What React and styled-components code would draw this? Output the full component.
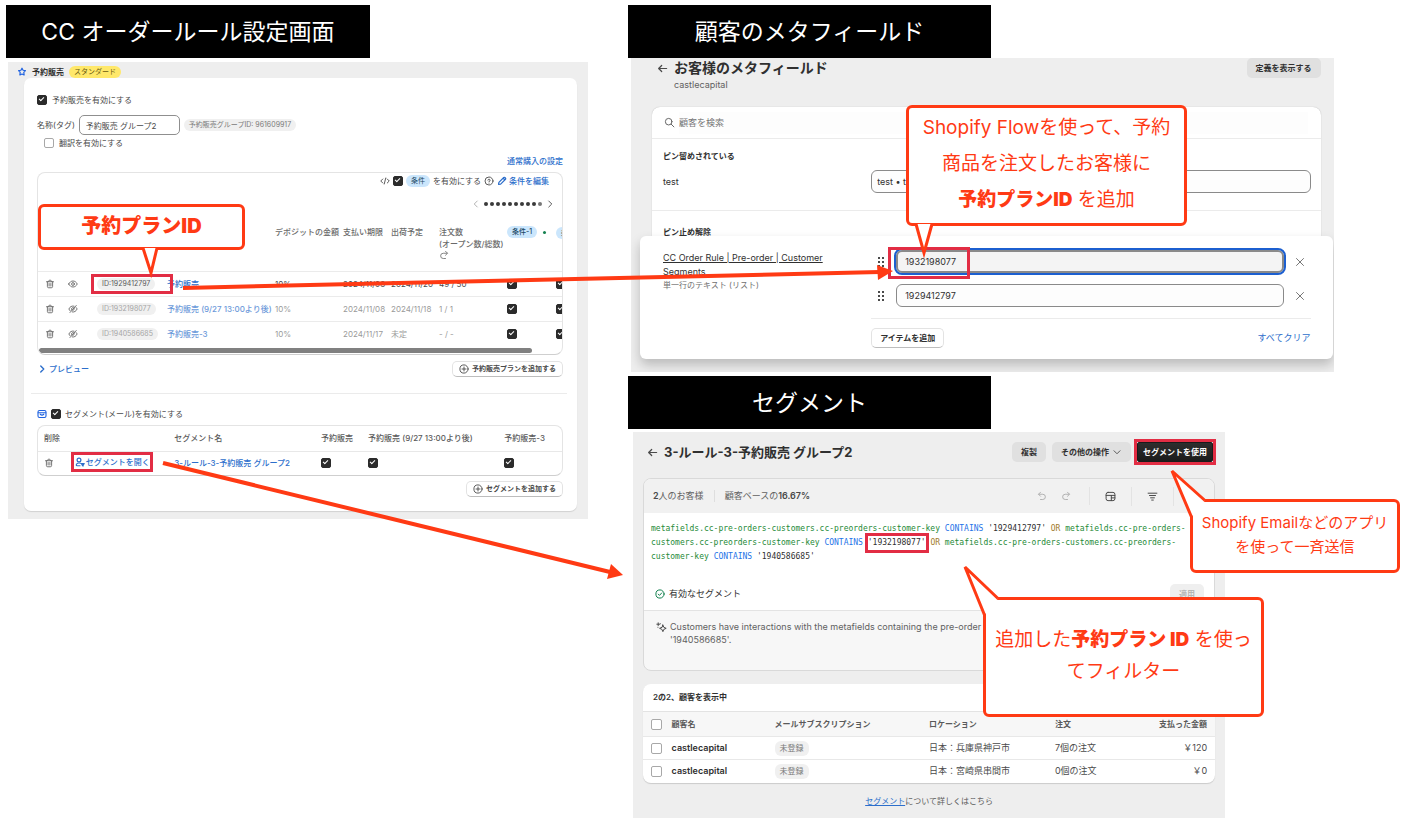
import styled, {createGlobalStyle, css} from 'styled-components';

const RED = '#ff3a14';
const MARK = '#e22d44';
const BLUE = '#2c6ecb';

const GlobalStyle = createGlobalStyle`
	*, *::before, *::after {
		box-sizing:border-box;
	}
	body {
		margin:0;
		background:#fff;
		color:#303030;
		font-family:Inter, "Noto Sans CJK JP", sans-serif;
		font-size:8px;
		line-height:12px;
	}
	button, input {
		font-family:inherit;
		color:inherit;
		margin:0;
	}
	h1, h2, h3, p {
		margin:0;
	}
`

/* ---------- icons (20 x 20 grid) ---------- */

const Svg = styled.svg`
	display:block;
	flex:none;
	width:${props=>props.$size || 10}px;
	height:${props=>props.$size || 10}px;
	fill:none;
	stroke:${props=>props.$color || '#4a4a4a'};
	stroke-width:${props=>props.$weight || 1.8};
	stroke-linecap:round;
	stroke-linejoin:round;
`

const shapes = {
	star:<path d="M10 2.5l2.2 4 4.6.8-3.2 3.4.6 5.3L10 14l-4.2 2 .6-5.3-3.2-3.4 4.6-.8z"/>,
	trash:<path d="M3 5.5h14M7.5 5.2V4A1.5 1.5 0 0 1 9 2.5h2A1.5 1.5 0 0 1 12.5 4v1.2M4.8 5.5V15a2.5 2.5 0 0 0 2.5 2.500h5.400a2.500 2.500 0 0 0 2.500-2.500V5.500M8.200 9v5M11.800 9v5"/>,
	eye:<><path d="M1.500 10C3.500 6 6.500 4 10 4s6.500 2 8.500 6c-2 4-5 6-8.500 6s-6.500-2-8.500-6z"/><circle cx="10" cy="10" r="2.800"/></>,
	eyeOff:<><path d="M12 4.300C7.500 3.200 3.800 5.400 1.800 10c.6 1.400 1.400 2.600 2.400 3.500M8.500 15.900c4.200.8 7.700-1.400 9.700-5.900-.5-1.200-1.200-2.200-2-3"/><path d="M16.500 3L4 17M7.500 11.500A2.800 2.800 0 0 1 11 7.400M12.600 9a2.800 2.800 0 0 1-3 3.700"/></>,
	code:<path d="M5.500 6L1.500 10l4 4M14.500 6l4 4-4 4M11.500 4l-3 12"/>,
	help:<><circle cx="10" cy="10" r="8"/><path d="M7.800 8.200A2.200 2.200 0 1 1 10 10.800v.6M10 14.200v.1"/></>,
	pencil:<path d="M12.500 4.500l3 3M3 17l.8-4.300L13.500 3a1.600 1.600 0 0 1 2.300 0L17 4.200a1.600 1.600 0 0 1 0 2.300l-9.700 9.700z"/>,
	left:<path d="M12.500 4l-6 6 6 6"/>,
	right:<path d="M7.500 4l6 6-6 6"/>,
	down:<path d="M4 7.500l6 6 6-6"/>,
	redo:<path d="M13 2.500l4 4-4 4M16.500 6.500H8.500a5 5 0 0 0 0 10.500h4.500"/>,
	undo:<path d="M7 2.500l-4 4 4 4M3.500 6.500h8a5 5 0 0 1 0 10.500H7"/>,
	plus:<><circle cx="10" cy="10" r="8.200"/><path d="M10 6v8M6 10h8"/></>,
	mail:<><rect x="2" y="3" width="16" height="14" rx="3"/><path d="M2.500 7.500h15M6.500 10.500c2 2 5 2 7 0"/></>,
	person:<><circle cx="8" cy="6" r="3.800"/><path d="M11 12.500c-4-1.500-8.500.5-8.500 3.500 0 1 .8 1.500 1.800 1.500H10M12.500 13h6l-2.200 2.500v2.500l-1.600-.5v-2z"/></>,
	back:<path d="M17.500 10H3M8.500 4.500L3 10l5.500 5.500"/>,
	search:<><circle cx="8.500" cy="8.500" r="6"/><path d="M13 13l5 5"/></>,
	close:<path d="M3 3l14 14M17 3L3 17"/>,
	layout:<><rect x="2" y="2.500" width="16" height="15" rx="3.500"/><path d="M2 8h16M11.500 8v9.500M11.500 12.500H18"/></>,
	filter:<path d="M2 4h16M4.500 8.200h11M6.500 12.400h7M8.500 16.500h3"/>,
	ok:<><circle cx="10" cy="10" r="8.200"/><path d="M6.500 10.300l2.500 2.500 4.500-5"/></>,
	sparkle:<><path d="M12.500 5.500l1.800 4.200 4.200 1.800-4.200 1.800-1.800 4.200-1.800-4.200-4.200-1.800 4.200-1.800z"/><path d="M4 1.500v5M1.500 4h5M8 3.200v.1M3.500 9.500v.1"/></>,
}

const Icon = ({name,size,color,weight})=>(
	<Svg viewBox="0 0 20 20" aria-hidden="true" $size={size} $color={color} $weight={weight}>
		{shapes[name]}
	</Svg>
)

/* ---------- shared parts ---------- */

const Canvas = styled.main`
	position:relative;
	display:grid;
	grid-template-columns:minmax(0,582fr) minmax(0,772fr);
	align-items:start;
	gap:40px;
	padding:5px 21px 7px 6px;
`

const Banner = styled.h1`
	display:flex;
	align-items:center;
	justify-content:center;
	width:${props=>props.$width};
	height:53px;
	background:#000;
	color:#fff;
	font-size:23px;
	font-weight:400;
	line-height:32px;
`

const CheckBox = styled.input.attrs({type:'checkbox'})`
	appearance:none;
	position:relative;
	flex:none;
	display:block;
	width:${props=>props.$large ? 11 : 10}px;
	height:${props=>props.$large ? 11 : 10}px;
	border:1px solid #a8a8a8;
	border-radius:2px;
	background:#fff;

	&:checked {
		background:#2b2b2b;
		border-color:#2b2b2b;
	}
	&:checked::after {
		content:"";
		position:absolute;
		left:1px;
		top:1px;
		width:5px;
		height:3px;
		border:solid #fff;
		border-width:0 0 1px 1px;
		transform:rotate(-45deg);
	}
`

const Badge = styled.span`
	display:inline-flex;
	align-items:center;
	height:${props=>props.$large ? 15 : 12}px;
	padding:0 5px;
	border-radius:6px;
	font-size:${props=>props.$large ? 8 : 7}px;
	white-space:nowrap;
	background:${props=>({warn:'#ffe86a',info:'#cbe6fc'})[props.$tone] || '#f0f0f0'};
	color:${props=>({warn:'#6b5a10',info:'#1c4a66',dim:'#a5a5a5',dark:'#5a5a5a'})[props.$tone] || '#7a7a7a'};
`

const TextLink = styled.a`
	display:inline-flex;
	align-items:center;
	gap:${props=>props.$gap || 0}px;
	color:${BLUE};
	font-weight:${props=>props.$bold ? 500 : 400};
	opacity:${props=>props.$dim ? 0.7 : 1};
	text-decoration:none;
	white-space:nowrap;
`

const Button = styled.button`
	display:inline-flex;
	align-items:center;
	gap:3px;
	height:${props=>props.$tall ? 20 : 16}px;
	padding:0 ${props=>props.$tall ? 8 : 6}px;
	border:1px solid #e3e3e3;
	border-bottom-color:#bdbdbd;
	border-radius:5px;
	background:#fff;
	font-size:${props=>props.$tall ? 8 : 7}px;
	font-weight:600;
	line-height:12px;
	white-space:nowrap;

	${props=>props.$tone === 'grey' && css`
		border-color:transparent;
		background:#e0e0e0;
	`}
	${props=>props.$tone === 'off' && css`
		border-color:transparent;
		background:#efefef;
		color:#b5b5b5;
	`}
	${props=>props.$tone === 'dark' && css`
		padding:0 5px;
		border-color:#1a1a1a;
		border-radius:2px;
		background:linear-gradient(#2e2e2e,#1c1c1c);
		color:#fff;
	`}
`

const IconButton = styled.button`
	display:flex;
	padding:0;
	border:0;
	background:none;
`

const Marked = styled.span`
	position:relative;
	display:inline-flex;
	align-items:center;

	&::after {
		content:"";
		position:absolute;
		inset:${props=>props.$inset};
		border:3px solid ${MARK};
		pointer-events:none;
	}
`

const Row = styled.div`
	display:flex;
	align-items:center;
	justify-content:${props=>props.$justify || 'flex-start'};
	gap:${props=>props.$gap || 5}px;
	height:${props=>props.$height}px;
	margin-top:${props=>props.$top || 0}px;
	padding:0 ${props=>props.$right || 0}px 0 ${props=>props.$left || 0}px;
	white-space:nowrap;
	color:#4a4a4a;
`

/* ---------- order rule settings ---------- */

const RulePanel = styled.section`
	margin:4px 0 0 2px;
	padding-bottom:8px;
	background:#eee;
`

const RuleHeader = styled.header`
	display:flex;
	align-items:center;
	gap:5px;
	height:16px;
	padding:3px 9px 0;

	h2 {
		font-size:8px;
		font-weight:700;
	}
`

const RuleCard = styled.div`
	margin:0 11px 0 16px;
	padding:17px 14px 14px 13px;
	border-radius:7px;
	background:#fff;
	box-shadow:0 1px 1px rgba(0,0,0,0.12);
`

const NameInput = styled.input`
	width:101px;
	height:20px;
	padding:0 6px;
	border:1px solid #8f8f8f;
	border-radius:5px;
	background:#fff;
	font-size:8px;
`

const TableBox = styled.div`
	margin-top:${props=>props.$top}px;
	overflow:hidden;
	border:1px solid #e4e4e4;
	border-bottom-color:#cfcfcf;
	border-radius:8px;
`

const PlanTable = styled.table`
	table-layout:fixed;
	width:577px;
	border-collapse:collapse;
	color:#6a6a6a;

	th {
		height:59px;
		padding:14px 0 0;
		font-weight:500;
		text-align:left;
		vertical-align:top;
		white-space:nowrap;
	}
	td {
		height:25px;
		padding:0;
		border-top:1px solid #ebebeb;
		white-space:nowrap;
	}
	tr > :first-child {
		padding-left:7px;
	}
`

const PlanRow = styled.tr`
	color:${props=>props.$dim ? '#9a9a9a' : '#4a4a4a'};
`

const ScrollBar = styled.div`
	width:94%;
	height:5px;
	margin:2px 0 1px 1px;
	border-radius:3px;
	background:#808080;
`

const Dots = styled.span`
	display:flex;
	gap:2px;
	i {
		width:4px;
		height:4px;
		border-radius:50%;
		background:#3a3a3a;
	}
	i:last-child {
		background:#777;
	}
`

const HeadBadge = styled.span`
	display:flex;
	align-items:center;
	gap:6px;
	i {
		width:3px;
		height:3px;
		border-radius:50%;
		background:#14804f;
	}
`

const Divider = styled.hr`
	height:1px;
	margin:16px -4px 15px -6px;
	border:0;
	background:#ebebeb;
`

const SegmentTable = styled.table`
	table-layout:fixed;
	width:100%;
	border-collapse:collapse;
	color:#5a5a5a;

	th {
		height:25px;
		padding:0;
		font-weight:500;
		text-align:left;
		white-space:nowrap;
	}
	td {
		height:24px;
		padding:0;
		border-top:1px solid #e8e8e8;
	}
	tr > :first-child {
		padding-left:6px;
	}
`

const plans = [
	{id:'1929412797',name:'予約販売',deposit:'10%',due:'2024/11/08',ship:'2024/11/20',orders:'49 / 50',visible:true},
	{id:'1932198077',name:'予約販売 (9/27 13:00より後)',deposit:'10%',due:'2024/11/08',ship:'2024/11/18',orders:'1 / 1'},
	{id:'1940586685',name:'予約販売-3',deposit:'10%',due:'2024/11/17',ship:'未定',orders:'- / -'},
]

const planCols = [30,29,70,108,68,48,48,68,49,59];
const segmentCols = ['7%','19%','28%','9%','26%','11%'];

const PlanId = ({id,dim})=>(
	<Badge $tone={dim ? 'dim' : 'dark'}>ID:{id}</Badge>
)

const RuleSettings = ()=>(
	<div>
		<Banner $width="62.500%">CC オーダールール設定画面</Banner>
		<RulePanel>
			<RuleHeader>
				<Icon name="star" color="#1f62e0" weight={2.4}/>
				<h2>予約販売</h2>
				<Badge $tone="warn">スタンダード</Badge>
			</RuleHeader>
			<RuleCard>
				<Row $height={10}>
					<CheckBox id="rule-on" defaultChecked/>
					<label htmlFor="rule-on">予約販売を有効にする</label>
				</Row>
				<Row $height={20} $top={10} $gap={4}>
					<label htmlFor="rule-name">名称(タグ)</label>
					<NameInput id="rule-name" defaultValue="予約販売 グループ2"/>
					<Badge>予約販売グループID: 961609917</Badge>
				</Row>
				<Row $height={13} $top={1} $left={7}>
					<CheckBox id="translate"/>
					<label htmlFor="translate">翻訳を有効にする</label>
				</Row>
				<Row $height={12} $top={6} $justify="flex-end">
					<TextLink href="#normal" $bold>通常購入の設定</TextLink>
				</Row>

				<TableBox $top={5}>
					<Row $height={16} $right={13} $gap={3} $justify="flex-end">
						<Icon name="code"/>
						<CheckBox id="cond-on" defaultChecked/>
						<Badge $tone="info">条件</Badge>
						<label htmlFor="cond-on">を有効にする</label>
						<Icon name="help"/>
						<TextLink href="#conditions" $bold $gap={2}>
							<Icon name="pencil" color={BLUE} weight={2.4}/>条件を編集
						</TextLink>
					</Row>
					<Row $height={16} $top={7} $right={7} $gap={3} $justify="flex-end">
						<IconButton aria-label="前へ"><Icon name="left" color="#aaa"/></IconButton>
						<Dots>{Array.from({length:10},(_,i)=><i key={i}/>)}</Dots>
						<IconButton aria-label="次へ"><Icon name="right"/></IconButton>
					</Row>
					<PlanTable>
						<colgroup>{planCols.map((w,i)=><col key={i} width={w}/>)}</colgroup>
						<thead>
							<tr>
								<th/><th/><th/><th/>
								<th>デポジットの金額</th>
								<th>支払い期限</th>
								<th>出荷予定</th>
								<th>注文数<br/>(オープン数/総数)<br/><Icon name="redo" color="#777"/></th>
								<th><HeadBadge><Badge $tone="info">条件-1</Badge><i/></HeadBadge></th>
								<th><Badge $tone="info">条件-2</Badge></th>
							</tr>
						</thead>
						<tbody>
							{plans.map(plan=>(
								<PlanRow key={plan.id} $dim={!plan.visible}>
									<td><IconButton aria-label="削除"><Icon name="trash" color="#666"/></IconButton></td>
									<td><IconButton aria-label="表示"><Icon name={plan.visible ? 'eye' : 'eyeOff'} color="#666"/></IconButton></td>
									<td>
										{plan.visible
											? <Marked $inset="-4px -18px -4px -6px"><PlanId id={plan.id}/></Marked>
											: <PlanId id={plan.id} dim/>}
									</td>
									<td><TextLink href="#plan" $bold $dim={!plan.visible}>{plan.name}</TextLink></td>
									<td>{plan.deposit}</td>
									<td>{plan.due}</td>
									<td>{plan.ship}</td>
									<td>{plan.orders}</td>
									<td><CheckBox aria-label="条件-1" defaultChecked/></td>
									<td><CheckBox aria-label="条件-2" defaultChecked/></td>
								</PlanRow>
							))}
						</tbody>
					</PlanTable>
					<ScrollBar/>
				</TableBox>

				<Row $height={16} $top={6} $justify="space-between">
					<TextLink href="#preview" $bold $gap={2}>
						<Icon name="right" color={BLUE} weight={2.8}/>プレビュー
					</TextLink>
					<Button><Icon name="plus"/>予約販売プランを追加する</Button>
				</Row>
				<Divider/>
				<Row $height={10} $gap={4}>
					<Icon name="mail" color="#1f62e0" weight={2.2}/>
					<CheckBox id="segment-on" defaultChecked/>
					<label htmlFor="segment-on">セグメント(メール)を有効にする</label>
				</Row>
				<TableBox $top={6}>
					<SegmentTable>
						<colgroup>{segmentCols.map((w,i)=><col key={i} width={w}/>)}</colgroup>
						<thead>
							<tr>
								<th>削除</th>
								<th/>
								<th>セグメント名</th>
								<th>予約販売</th>
								<th>予約販売 (9/27 13:00より後)</th>
								<th>予約販売-3</th>
							</tr>
						</thead>
						<tbody>
							<tr>
								<td><IconButton aria-label="削除"><Icon name="trash" color="#666"/></IconButton></td>
								<td>
									<Marked $inset="-4px -3px -4px -4px">
										<TextLink href="#segment" $bold $gap={1}>
											<Icon name="person" color={BLUE} weight={2.4}/>セグメントを開く
										</TextLink>
									</Marked>
								</td>
								<td><TextLink href="#segment" $bold>3-ルール-3-予約販売 グループ2</TextLink></td>
								<td><CheckBox aria-label="予約販売" defaultChecked/></td>
								<td><CheckBox aria-label="予約販売 (9/27 13:00より後)" defaultChecked/></td>
								<td><CheckBox aria-label="予約販売-3" defaultChecked/></td>
							</tr>
						</tbody>
					</SegmentTable>
				</TableBox>
				<Row $height={16} $top={5} $justify="flex-end">
					<Button><Icon name="plus"/>セグメントを追加する</Button>
				</Row>
			</RuleCard>
		</RulePanel>
	</div>
)

/* ---------- customer metafields ---------- */

const MetaPanel = styled.section`
	width:91%;
	margin:0 0 4px 3px;
	padding:0 13px 13px 21px;
	overflow:hidden;
	background:#eee;
`

const PageHeader = styled.header`
	display:flex;
	align-items:flex-start;
	gap:6px;
	height:${props=>props.$height}px;
	padding:${props=>props.$pad};

	h2 {
		font-size:${props=>props.$title}px;
		font-weight:700;
		line-height:20px;
		white-space:nowrap;
	}
	p {
		font-size:9px;
		line-height:14px;
		color:#616161;
	}
	> svg {
		margin-top:5px;
	}
	> div {
		flex:1;
	}
`

const MetaCard = styled.div`
	height:129px;
	border-radius:8px 8px 0 0;
	background:#fff;
	box-shadow:0 0 1px rgba(0,0,0,0.3);

	h3 {
		font-size:8px;
		font-weight:700;
	}
`

const SearchBar = styled.label`
	display:flex;
	align-items:center;
	gap:4px;
	height:32px;
	padding:0 13px 0 12px;
	border-bottom:1px solid #ebebeb;
	input {
		flex:1;
		height:22px;
		padding:0;
		border:0;
		background:#fdfdfd;
		font-size:9px;
	}
	input::placeholder {
		color:#757575;
		opacity:1;
	}
`

const MetaSection = styled.div`
	padding:${props=>props.$line ? 11 : 15}px 10px 0 11px;
	height:${props=>props.$line ? 72 : 25}px;
	border-bottom:${props=>props.$line ? '1px solid #ebebeb' : 0};
`

const Field = styled.div`
	display:grid;
	grid-template-columns:208fr 439fr;
	align-items:${props=>props.$top ? 'start' : 'center'};
	margin-top:${props=>props.$top ? 0 : 8}px;
	font-size:9px;
`

const TextInput = styled.input`
	flex:1;
	width:100%;
	min-width:0;
	height:23px;
	padding:0 ${props=>props.$narrow ? 5 : 8}px;
	border:1px solid #8a8a8a;
	border-radius:6px;
	background:${props=>props.$active ? '#f4f4f4' : '#fdfdfd'};
	font-size:9px;
	${props=>props.$active && css`
		border-width:2px;
		padding:0 7px;
		outline:2px solid #1c5fd0;
	`}
`

const Popup = styled.div`
	position:relative;
	margin:0 -12px;
	height:123px;
	padding:14px 22px 11px 23px;
	border-radius:6px;
	background:#fff;
	box-shadow:0 6px 12px rgba(0,0,0,0.22);
`

const FieldName = styled.div`
	padding:1px 20px 0 0;
	line-height:14px;
	a {
		color:#303030;
		text-decoration:underline;
	}
	small {
		display:block;
		font-size:8px;
		line-height:12px;
		color:#707070;
	}
`

const ItemRow = styled.div`
	display:flex;
	align-items:center;
	gap:11px;
	height:23px;
	margin-bottom:11px;
	padding:0 6px 0 7px;
`

const Handle = styled.span`
	display:grid;
	grid-template-columns:2px 2px;
	gap:2px;
	width:7px;
	i {
		width:2px;
		height:2px;
		background:#4a4a4a;
	}
`

const ItemMark = styled.span`
	position:absolute;
	left:248px;
	top:11px;
	width:82px;
	height:32px;
	border:3px solid ${MARK};
	pointer-events:none;
`

const PopupFooter = styled.div`
	display:flex;
	align-items:center;
	justify-content:space-between;
	padding-top:9px;
	border-top:1px solid #ebebeb;
`

const values = ['1932198077','1929412797'];

const Metafields = ()=>(
	<>
		<Banner $width="47%">顧客のメタフィールド</Banner>
		<MetaPanel>
			<PageHeader $height={49} $title={14} $pad="0 0 0 5px">
				<Icon name="back" size={11} weight={2.2}/>
				<div>
					<h2>お客様のメタフィールド</h2>
					<p>castlecapital</p>
				</div>
				<Button $tall $tone="grey">定義を表示する</Button>
			</PageHeader>
			<MetaCard>
				<SearchBar>
					<Icon name="search" size={11} color="#666"/>
					<input type="search" placeholder="顧客を検索" aria-label="顧客を検索"/>
				</SearchBar>
				<MetaSection $line>
					<h3>ピン留めされている</h3>
					<Field>
						<label htmlFor="test-field">test</label>
						<TextInput id="test-field" defaultValue="test • t" $narrow/>
					</Field>
				</MetaSection>
				<MetaSection>
					<h3>ピン止め解除</h3>
				</MetaSection>
			</MetaCard>
			<Popup>
				<Field $top>
					<FieldName>
						<a href="#field">CC Order Rule | Pre-order | Customer Segments</a>
						<small>単一行のテキスト (リスト)</small>
					</FieldName>
					<div>
						{values.map((value,i)=>(
							<ItemRow key={value}>
								<Handle>{Array.from({length:6},(_,n)=><i key={n}/>)}</Handle>
								<TextInput aria-label={`値 ${i+1}`} defaultValue={value} $active={i === 0}/>
								<IconButton aria-label="値を削除"><Icon name="close" color="#777" weight={2}/></IconButton>
							</ItemRow>
						))}
						<PopupFooter>
							<Button $tall>アイテムを追加</Button>
							<TextLink href="#clear">すべてクリア</TextLink>
						</PopupFooter>
					</div>
				</Field>
				<ItemMark/>
			</Popup>
		</MetaPanel>
	</>
)

/* ---------- segment ---------- */

const SegmentPanel = styled.section`
	width:76.700%;
	margin:3px 0 0 5px;
	padding:0 10px 9px 10px;
	background:#eee;
`

const QueryCard = styled.div`
	overflow:hidden;
	border:1px solid #d9d9d9;
	border-radius:8px;
	background:#f7f7f7;
`

const QueryHeader = styled.div`
	display:flex;
	align-items:center;
	height:34px;
	padding-left:9px;
	background:#f1f1f1;
	font-size:9px;
	color:#616161;
	b {
		font-weight:600;
		color:#4a4a4a;
	}
	span + span {
		margin-left:10px;
		padding-left:10px;
		border-left:1px solid #dedede;
	}
`

const Tools = styled.div`
	display:flex;
	align-items:center;
	margin-left:auto;
	margin-right:40px;
`

const Tool = styled(IconButton)`
	padding:4px ${props=>props.$wide ? 15 : 7}px;
	border-right:${props=>props.$wide ? '1px solid #e3e3e3' : 0};
`

const ToolGroup = styled.span`
	display:flex;
	padding-right:11px;
	border-right:1px solid #e3e3e3;
`

const QueryBody = styled.div`
	padding:9px 10px 6px 7px;
	border-bottom:1px solid #e3e3e3;
	background:#fff;
`

const Query = styled.code`
	display:block;
	margin-bottom:20px;
	font-family:"DejaVu Sans Mono", monospace;
	font-size:8px;
	line-height:14px;
	color:#303030;
	u {
		color:#258a37;
		text-decoration:none;
	}
	em {
		color:#1f74e8;
		font-style:normal;
	}
	b {
		color:#a27b2c;
		font-weight:400;
	}
`

const Status = styled.div`
	display:flex;
	align-items:center;
	gap:4px;
	height:20px;
	padding-left:4px;
	font-size:9px;
	button {
		margin-left:auto;
	}
`

const Summary = styled.div`
	display:flex;
	gap:3px;
	min-height:59px;
	padding:9px 40px 0 12px;
	color:#616161;
	p {
		font-size:9px;
		line-height:13px;
	}
	svg {
		margin-top:2px;
	}
`

const CustomerCard = styled.div`
	margin-top:13px;
	overflow:hidden;
	border-radius:8px;
	background:#fff;
	box-shadow:0 1px 1px rgba(0,0,0,0.15);
	h3 {
		padding:0 10px;
		font-size:8px;
		font-weight:600;
		line-height:27px;
	}
`

const CustomerTable = styled.table`
	table-layout:fixed;
	width:100%;
	border-collapse:collapse;
	color:#4a4a4a;

	th {
		height:25px;
		padding:0;
		border-top:1px solid #e3e3e3;
		background:#f7f7f7;
		font-weight:600;
		text-align:left;
		white-space:nowrap;
		color:#5a5a5a;
	}
	td {
		height:23px;
		padding:0;
		border-top:1px solid #e8e8e8;
		font-size:9px;
		white-space:nowrap;
	}
	strong {
		font-weight:600;
		color:#303030;
	}
	tr > :first-child {
		padding-left:8px;
	}
	tr > :last-child {
		padding-right:8px;
		text-align:right;
	}
`

const Footnote = styled.p`
	padding-top:10px;
	text-align:center;
	line-height:16px;
	color:#5a5a5a;
	a {
		color:${BLUE};
	}
`

const customerCols = ['5%','18%','27%','22%','14%','14%'];

const customers = [
	{place:'日本：兵庫県神戸市',orders:'7個の注文',spent:'￥120'},
	{place:'日本：宮崎県串間市',orders:'0個の注文',spent:'￥0'},
]

const Segment = ()=>(
	<>
		<Banner $width="47%" as="h2">セグメント</Banner>
		<SegmentPanel>
			<PageHeader $height={46} $title={13} $pad="10px 2px 0 4px">
				<Icon name="back" size={11} weight={2.2}/>
				<div><h2>3-ルール-3-予約販売 グループ2</h2></div>
				<Button $tall $tone="grey">複製</Button>
				<Button $tall $tone="grey">その他の操作<Icon name="down"/></Button>
				<Marked $inset="-3px">
					<Button $tall $tone="dark">セグメントを使用</Button>
				</Marked>
			</PageHeader>
			<QueryCard>
				<QueryHeader>
					<span><b>2</b>人のお客様</span>
					<span>顧客ベースの<b>16.67%</b></span>
					<Tools>
						<ToolGroup>
							<Tool aria-label="元に戻す"><Icon name="undo" color="#aaa"/></Tool>
							<Tool aria-label="やり直す"><Icon name="redo" color="#aaa"/></Tool>
						</ToolGroup>
						<Tool aria-label="テンプレート" $wide><Icon name="layout" size={11}/></Tool>
						<Tool aria-label="フィルター" $wide><Icon name="filter" size={11}/></Tool>
					</Tools>
				</QueryHeader>
				<QueryBody>
					<Query>
						<u>metafields.cc-pre-orders-customers.cc-preorders-customer-key</u> <em>CONTAINS</em> '1929412797' <b>OR</b>{' '}
						<u>metafields.cc-pre-orders-customers.cc-preorders-customer-key</u> <em>CONTAINS</em>{' '}
						<Marked $inset="-3px">'1932198077'</Marked> <b>OR</b>{' '}
						<u>metafields.cc-pre-orders-customers.cc-preorders-customer-key</u> <em>CONTAINS</em> '1940586685'
					</Query>
					<Status>
						<Icon name="ok" color="#14804f" weight={2}/>
						有効なセグメント
						<Button $tall $tone="off" disabled>適用</Button>
					</Status>
				</QueryBody>
				<Summary>
					<Icon name="sparkle" size={11}/>
					<p>
						Customers have interactions with the metafields containing the pre-order c<br/>
						'1940586685'.
					</p>
				</Summary>
			</QueryCard>
			<CustomerCard>
				<h3>2の2、顧客を表示中</h3>
				<CustomerTable>
					<colgroup>{customerCols.map((w,i)=><col key={i} width={w}/>)}</colgroup>
					<thead>
						<tr>
							<th><CheckBox $large aria-label="すべて選択"/></th>
							<th>顧客名</th>
							<th>メールサブスクリプション</th>
							<th>ロケーション</th>
							<th>注文</th>
							<th>支払った金額</th>
						</tr>
					</thead>
					<tbody>
						{customers.map(item=>(
							<tr key={item.place}>
								<td><CheckBox $large aria-label="castlecapital"/></td>
								<td><strong>castlecapital</strong></td>
								<td><Badge $large>未登録</Badge></td>
								<td>{item.place}</td>
								<td>{item.orders}</td>
								<td>{item.spent}</td>
							</tr>
						))}
					</tbody>
				</CustomerTable>
			</CustomerCard>
			<Footnote><a href="#help">セグメント</a>について詳しくはこちら</Footnote>
		</SegmentPanel>
	</>
)

/* ---------- annotations laid over the panels ---------- */

const Arrows = styled.svg`
	position:absolute;
	left:0;
	top:0;
	width:1421px;
	height:825px;
	pointer-events:none;
	line {
		stroke:${RED};
		stroke-width:4;
	}
	polygon {
		fill:${RED};
	}
`

const Bubble = styled.div`
	position:absolute;
	left:${props=>props.$x}px;
	top:${props=>props.$y}px;
	display:flex;
	align-items:center;
	justify-content:center;
	width:${props=>props.$w}px;
	height:${props=>props.$h}px;
	padding-bottom:3px;
	border:3px solid ${RED};
	border-radius:6px;
	background:#fff;
	color:${RED};
	font-size:${props=>props.$size}px;
	line-height:${props=>props.$line}px;
	text-align:center;
	white-space:nowrap;

	b {
		font-weight:900;
	}
	svg {
		position:absolute;
		left:-3px;
		top:-3px;
		width:100%;
		height:100%;
		overflow:visible;
		fill:#fff;
		stroke:${RED};
		stroke-width:3;
	}
	p {
		position:relative;
	}
`

const Callout = ({tail,children,...box})=>(
	<Bubble {...box}>
		<svg aria-hidden="true"><path d={tail}/></svg>
		<p>{children}</p>
	</Bubble>
)

const App = ()=>(
	<>
		<GlobalStyle/>
		<Canvas>
			<RuleSettings/>
			<div>
				<Metafields/>
				<Segment/>
			</div>

			<Arrows aria-hidden="true">
				<line x1="183" y1="288" x2="880" y2="272"/>
				<polygon points="877,265 893,271 878,280"/>
				<line x1="163" y1="463" x2="610" y2="572"/>
				<polygon points="611,564 623,575 607,579"/>
			</Arrows>
			<Callout $x={38} $y={204} $w={207} $h={46} $size={20} $line={30} tail="M105 44L113 69L119 44">
				<b>予約プランID</b>
			</Callout>
			<Callout $x={906} $y={105} $w={281} $h={121} $size={19} $line={36} tail="M10 119L18 148L26 119">
				Shopify Flowを使って、予約<br/>商品を注文したお客様に<br/><b>予約プランID</b> を追加
			</Callout>
			<Callout $x={1190} $y={499} $w={210} $h={74} $size={15} $line={24} tail="M1.500 18L-18 -28L15 1.500">
				Shopify Emailなどのアプリ<br/>を使って一斉送信
			</Callout>
			<Callout $x={983} $y={597} $w={281} $h={120} $size={19} $line={32} tail="M1.500 18L-18 -30L15 1.500">
				追加した<b>予約プラン ID</b> を使っ<br/>てフィルター
			</Callout>
		</Canvas>
	</>
)

export default App;
